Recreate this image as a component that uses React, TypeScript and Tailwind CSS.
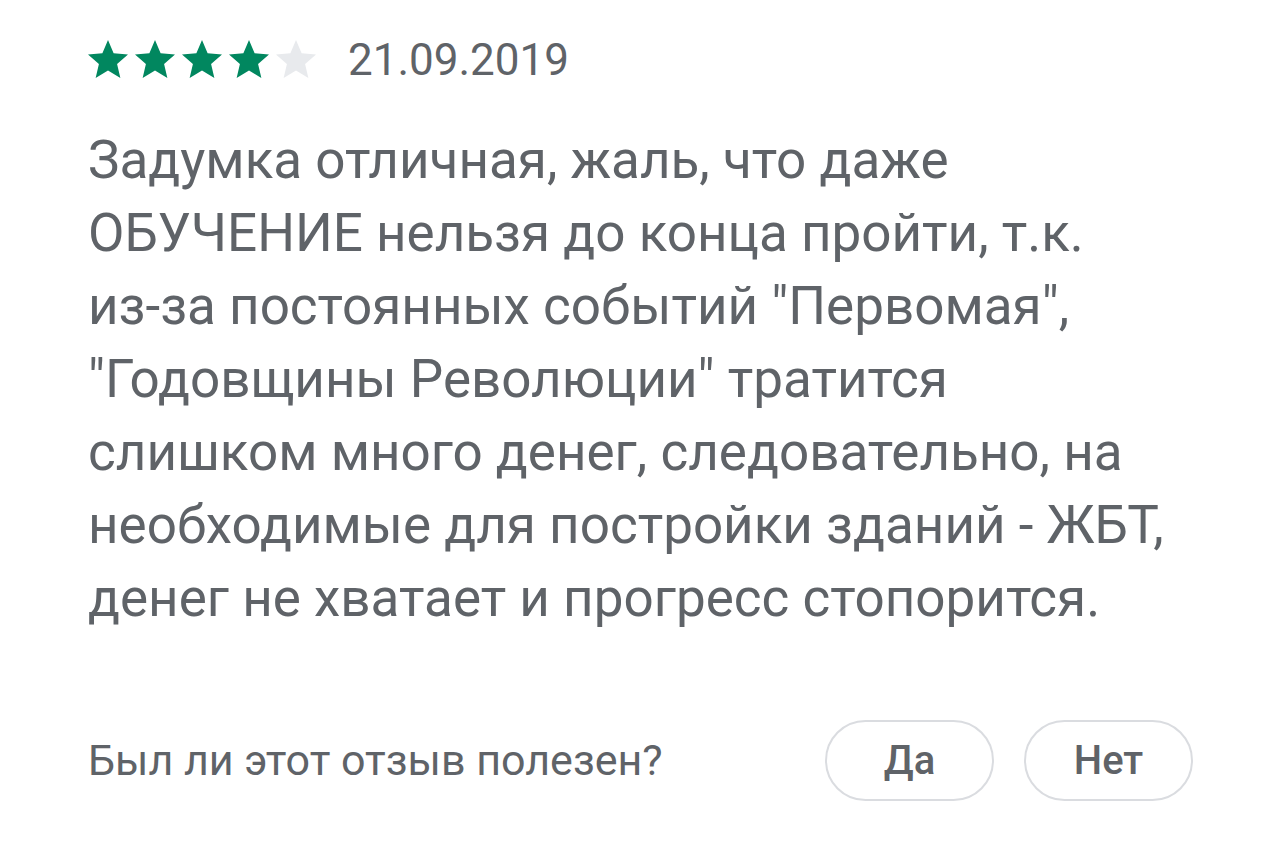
const lines = [
  "Задумка отличная, жаль, что даже",
  "ОБУЧЕНИЕ нельзя до конца пройти, т.к.",
  "из-за постоянных событий \"Первомая\",",
  "\"Годовщины Революции\" тратится",
  "слишком много денег, следовательно, на",
  "необходимые для постройки зданий - ЖБТ,",
  "денег не хватает и прогресс стопорится.",
];

function Star({ filled }: { filled: boolean }) {
  return (
    <svg viewBox="0 0 24 24" className="w-[48px] h-[48px]">
      <path
        d="M12 17.27L18.18 21l-1.64-7.03L22 9.24l-7.19-.61L12 2 9.19 8.63 2 9.24l5.46 4.73L5.82 21z"
        fill={filled ? "#01875f" : "#e8eaed"}
      />
    </svg>
  );
}

export default function App() {
  const rating = 4;
  return (
    <main className="min-h-screen bg-white pl-[88px] pr-[87px] pt-[36px] font-['Roboto',sans-serif] text-[#5f6368]">
      <div className="flex items-center">
        <div className="flex -ml-1 -space-x-px">
          {[1, 2, 3, 4, 5].map((i) => (
            <Star key={i} filled={i <= rating} />
          ))}
        </div>
        <span className="ml-[28px] text-[44px] leading-none">21.09.2019</span>
      </div>

      <p className="mt-[40px] text-[53px] leading-[73px]">
        {lines.map((line, i) => (
          <span key={i} className="block whitespace-nowrap">
            {line}
          </span>
        ))}
      </p>

      <div className="mt-[85px] flex items-center justify-between">
        <p className="text-[43px]">Был ли этот отзыв полезен?</p>
        <div className="flex gap-[30px]">
          <button className="w-[169px] h-[81px] rounded-full border-2 border-[#dadce0] text-[40px] font-medium text-[#5f6368]">
            Да
          </button>
          <button className="w-[169px] h-[81px] rounded-full border-2 border-[#dadce0] text-[40px] font-medium text-[#5f6368]">
            Нет
          </button>
        </div>
      </div>
    </main>
  );
}
